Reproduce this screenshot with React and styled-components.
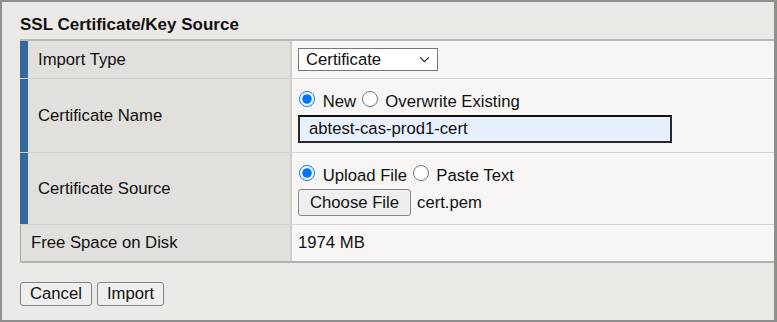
import styled, { createGlobalStyle } from 'styled-components';

const GlobalStyle = createGlobalStyle`
  html, body {
    margin: 0;
    padding: 0;
    background: #eae9e5;
  }
  body {
    font-family: "Liberation Sans", Arial, sans-serif;
    color: #111;
  }
`;

export default function App() {
  return (
    <>
      <GlobalStyle />
      <Frame>
        <Title>SSL Certificate/Key Source</Title>
        <PropTable>
          <Row $height={38}>
            <Label $required>Import Type</Label>
            <Value>
              <SelectBox>
                <Select defaultValue="cert">
                  <option value="cert">Certificate</option>
                  <option value="key">Key</option>
                </Select>
                <Chevron viewBox="0 0 12 8" aria-hidden="true">
                  <path d="M1 1.5 L6 6.5 L11 1.5" fill="none" stroke="#222" strokeWidth="1.3" />
                </Chevron>
              </SelectBox>
            </Value>
          </Row>
          <Row $height={74}>
            <Label $required>Certificate Name</Label>
            <Value $stack>
              <RadioLine>
                <Radio name="name" defaultChecked /> New{' '}
                <Radio name="name" /> Overwrite Existing
              </RadioLine>
              <TextInput defaultValue="abtest-cas-prod1-cert" />
            </Value>
          </Row>
          <Row $height={72}>
            <Label $required>Certificate Source</Label>
            <Value $stack>
              <RadioLine>
                <Radio name="src" defaultChecked /> Upload File{' '}
                <Radio name="src" /> Paste Text
              </RadioLine>
              <FileLine>
                <Button type="button">Choose File</Button>
                <span>cert.pem</span>
              </FileLine>
            </Value>
          </Row>
          <Row $height={36} $last>
            <Label>Free Space on Disk</Label>
            <Value>1974 MB</Value>
          </Row>
        </PropTable>
        <Actions>
          <Button type="button">Cancel</Button>
          <Button type="button">Import</Button>
        </Actions>
      </Frame>
    </>
  );
}

const Frame = styled.div`
  box-sizing: border-box;
  width: 777px;
  height: 322px;
  border: 2px solid #8e8e8e;
  border-right-width: 3px;
  background: #eae9e5;
  padding-left: 18px;
`;

const Title = styled.div`
  font-size: 17px;
  font-weight: 700;
  line-height: 20px;
  margin: 13px 0 4px;
  color: #111;
`;

const PropTable = styled.div`
  border-top: 2px solid #bab8b4;
  border-bottom: 2px solid #b3b1ad;
  font-size: 16.7px;
`;

const Row = styled.div`
  box-sizing: border-box;
  display: grid;
  grid-template-columns: 270px 1fr;
  height: ${p => p.$height}px;
  border-bottom: ${p => (p.$last ? 'none' : '1px solid #d3d1cd')};
`;

const Label = styled.div`
  box-sizing: border-box;
  display: flex;
  align-items: center;
  background: #e1e0dc;
  border-left: ${p => (p.$required ? '8px solid #35689a' : '1px solid #a9a7a3')};
  padding-left: 10px;
  line-height: 20px;
`;

const Value = styled.div`
  box-sizing: border-box;
  display: flex;
  flex-direction: ${p => (p.$stack ? 'column' : 'row')};
  align-items: ${p => (p.$stack ? 'flex-start' : 'center')};
  padding: ${p => (p.$stack ? '12px 0 0 6px' : '0 0 0 6px')};
  background: #f7f6f4;
  border-left: 2px solid #cfcdca;
  line-height: 20px;
`;

const SelectBox = styled.div`
  position: relative;
  width: 140px;
  height: 23px;
`;

const Select = styled.select`
  appearance: none;
  box-sizing: border-box;
  width: 140px;
  height: 23px;
  font-family: "Liberation Sans", Arial, sans-serif;
  font-size: 16.7px;
  color: #111;
  background: #fff;
  border: 1px solid #767676;
  border-radius: 0;
  padding: 0 24px 0 7px;
  outline: none;
`;

const Chevron = styled.svg`
  position: absolute;
  right: 8px;
  top: 8px;
  width: 11px;
  height: 7px;
  pointer-events: none;
`;

const RadioLine = styled.div`
  line-height: 20px;
  white-space: nowrap;
`;

const Radio = styled.input.attrs({ type: 'radio' })`
  width: 16px;
  height: 16px;
  margin: 0 3px 0 1px;
  vertical-align: baseline;
  accent-color: #0075ff;
`;

const TextInput = styled.input.attrs({ type: 'text' })`
  box-sizing: border-box;
  width: 374px;
  height: 28px;
  margin-top: 3px;
  padding: 0 9px;
  border: 2px solid #2a2a2a;
  border-top-color: #111;
  background: #e8f0fe;
  font-family: "Liberation Sans", Arial, sans-serif;
  font-size: 16.7px;
  color: #111;
  outline: none;
`;

const FileLine = styled.div`
  display: flex;
  align-items: center;
  gap: 6px;
  margin-top: 3px;
`;

const Button = styled.button`
  box-sizing: border-box;
  height: 24px;
  padding: 0 9px;
  font-family: "Liberation Sans", Arial, sans-serif;
  font-size: 16.7px;
  color: #111;
  background: #efefef;
  border: 1px solid #858585;
  border-radius: 3px;

  ${FileLine} & {
    height: 27px;
    padding: 0 11px;
  }
`;

const Actions = styled.div`
  display: flex;
  gap: 5px;
  margin-top: 19px;
`;
